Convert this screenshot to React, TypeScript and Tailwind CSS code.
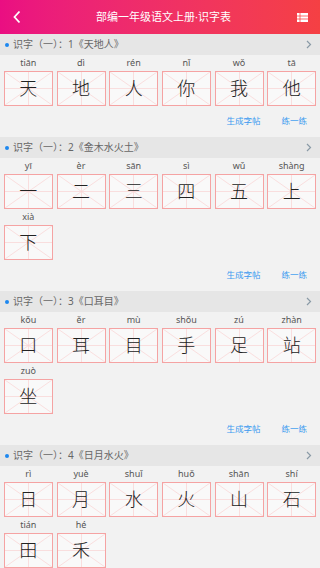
const sections = [
  {
    title: "识字（一）：1《天地人》",
    chars: [
      ["tiān", "天"],
      ["dì", "地"],
      ["rén", "人"],
      ["nǐ", "你"],
      ["wǒ", "我"],
      ["tā", "他"],
    ],
  },
  {
    title: "识字（一）：2《金木水火土》",
    chars: [
      ["yī", "一"],
      ["èr", "二"],
      ["sān", "三"],
      ["sì", "四"],
      ["wǔ", "五"],
      ["shàng", "上"],
      ["xià", "下"],
    ],
  },
  {
    title: "识字（一）：3《口耳目》",
    chars: [
      ["kǒu", "口"],
      ["ěr", "耳"],
      ["mù", "目"],
      ["shǒu", "手"],
      ["zú", "足"],
      ["zhàn", "站"],
      ["zuò", "坐"],
    ],
  },
  {
    title: "识字（一）：4《日月水火》",
    chars: [
      ["rì", "日"],
      ["yuè", "月"],
      ["shuǐ", "水"],
      ["huǒ", "火"],
      ["shān", "山"],
      ["shí", "石"],
      ["tián", "田"],
      ["hé", "禾"],
    ],
  },
];

function CharBox({ py, ch }: { py: string; ch: string }) {
  return (
    <div className="flex flex-col items-center">
      <div className="h-[16px] text-[9px] leading-[16px] text-[#555]">{py}</div>
      <div className="relative w-[49px] h-[35px] border border-[#f5a3a3] bg-[#f9f9f9]">
        <svg className="absolute inset-0" width="47" height="33" viewBox="0 0 47 33">
          <line x1="0" y1="0" x2="47" y2="33" stroke="#f9d2d2" strokeWidth="0.7" />
          <line x1="47" y1="0" x2="0" y2="33" stroke="#f9d2d2" strokeWidth="0.7" />
          <line x1="23.5" y1="0" x2="23.5" y2="33" stroke="#f9d2d2" strokeWidth="0.7" />
          <line x1="0" y1="16.5" x2="47" y2="16.5" stroke="#f9d2d2" strokeWidth="0.7" />
        </svg>
        <div className="relative flex h-full items-center justify-center text-[18px] font-light text-[#222]">
          {ch}
        </div>
      </div>
    </div>
  );
}

export default function App() {
  return (
    <div
      className="w-[320px] min-h-[568px] bg-[#f2f2f2]"
      style={{ fontFamily: '"Noto Sans", "Noto Sans CJK SC", sans-serif' }}
    >
      <div className="h-[34px] flex items-center px-[12px] bg-gradient-to-r from-[#ea0e82] to-[#f54043] text-white">
        <svg width="10" height="14" viewBox="0 0 10 14">
          <path d="M7.5 1.5 L2.5 7 L7.5 12.5" fill="none" stroke="white" strokeWidth="1.8" />
        </svg>
        <div className="flex-1 text-center text-[11px] pl-[8px]">部编一年级语文上册·识字表</div>
        <svg width="11" height="9" viewBox="0 0 11 9">
          <rect x="0" y="0" width="11" height="9" fill="white" />
          <line x1="0" y1="3" x2="11" y2="3" stroke="#f44" strokeWidth="0.8" />
          <line x1="0" y1="6" x2="11" y2="6" stroke="#f44" strokeWidth="0.8" />
          <line x1="3" y1="0" x2="3" y2="9" stroke="#f44" strokeWidth="0.8" />
        </svg>
      </div>

      {sections.map((s) => (
        <div key={s.title}>
          <div className="h-[21px] flex items-center justify-between bg-[#e6e6e6] pl-[5px] pr-[8px]">
            <div className="flex items-center">
              <span className="w-[4px] h-[4px] rounded-full bg-[#1e88f0] mr-[4px]" />
              <span className="text-[10px] text-[#666]">{s.title}</span>
            </div>
            <svg width="6" height="9" viewBox="0 0 6 9">
              <path d="M1 1 L4.5 4.5 L1 8" fill="none" stroke="#8a9aa6" strokeWidth="1.2" />
            </svg>
          </div>
          <div className="grid grid-cols-6 gap-x-[4px] px-[4px]">
            {s.chars.map(([py, ch]) => (
              <CharBox key={ch} py={py} ch={ch} />
            ))}
          </div>
          <div className="h-[31px] flex items-center justify-end gap-[21px] pr-[13px] text-[8.5px] text-[#3a9af0]">
            <span>生成字帖</span>
            <span>练一练</span>
          </div>
        </div>
      ))}
    </div>
  );
}
